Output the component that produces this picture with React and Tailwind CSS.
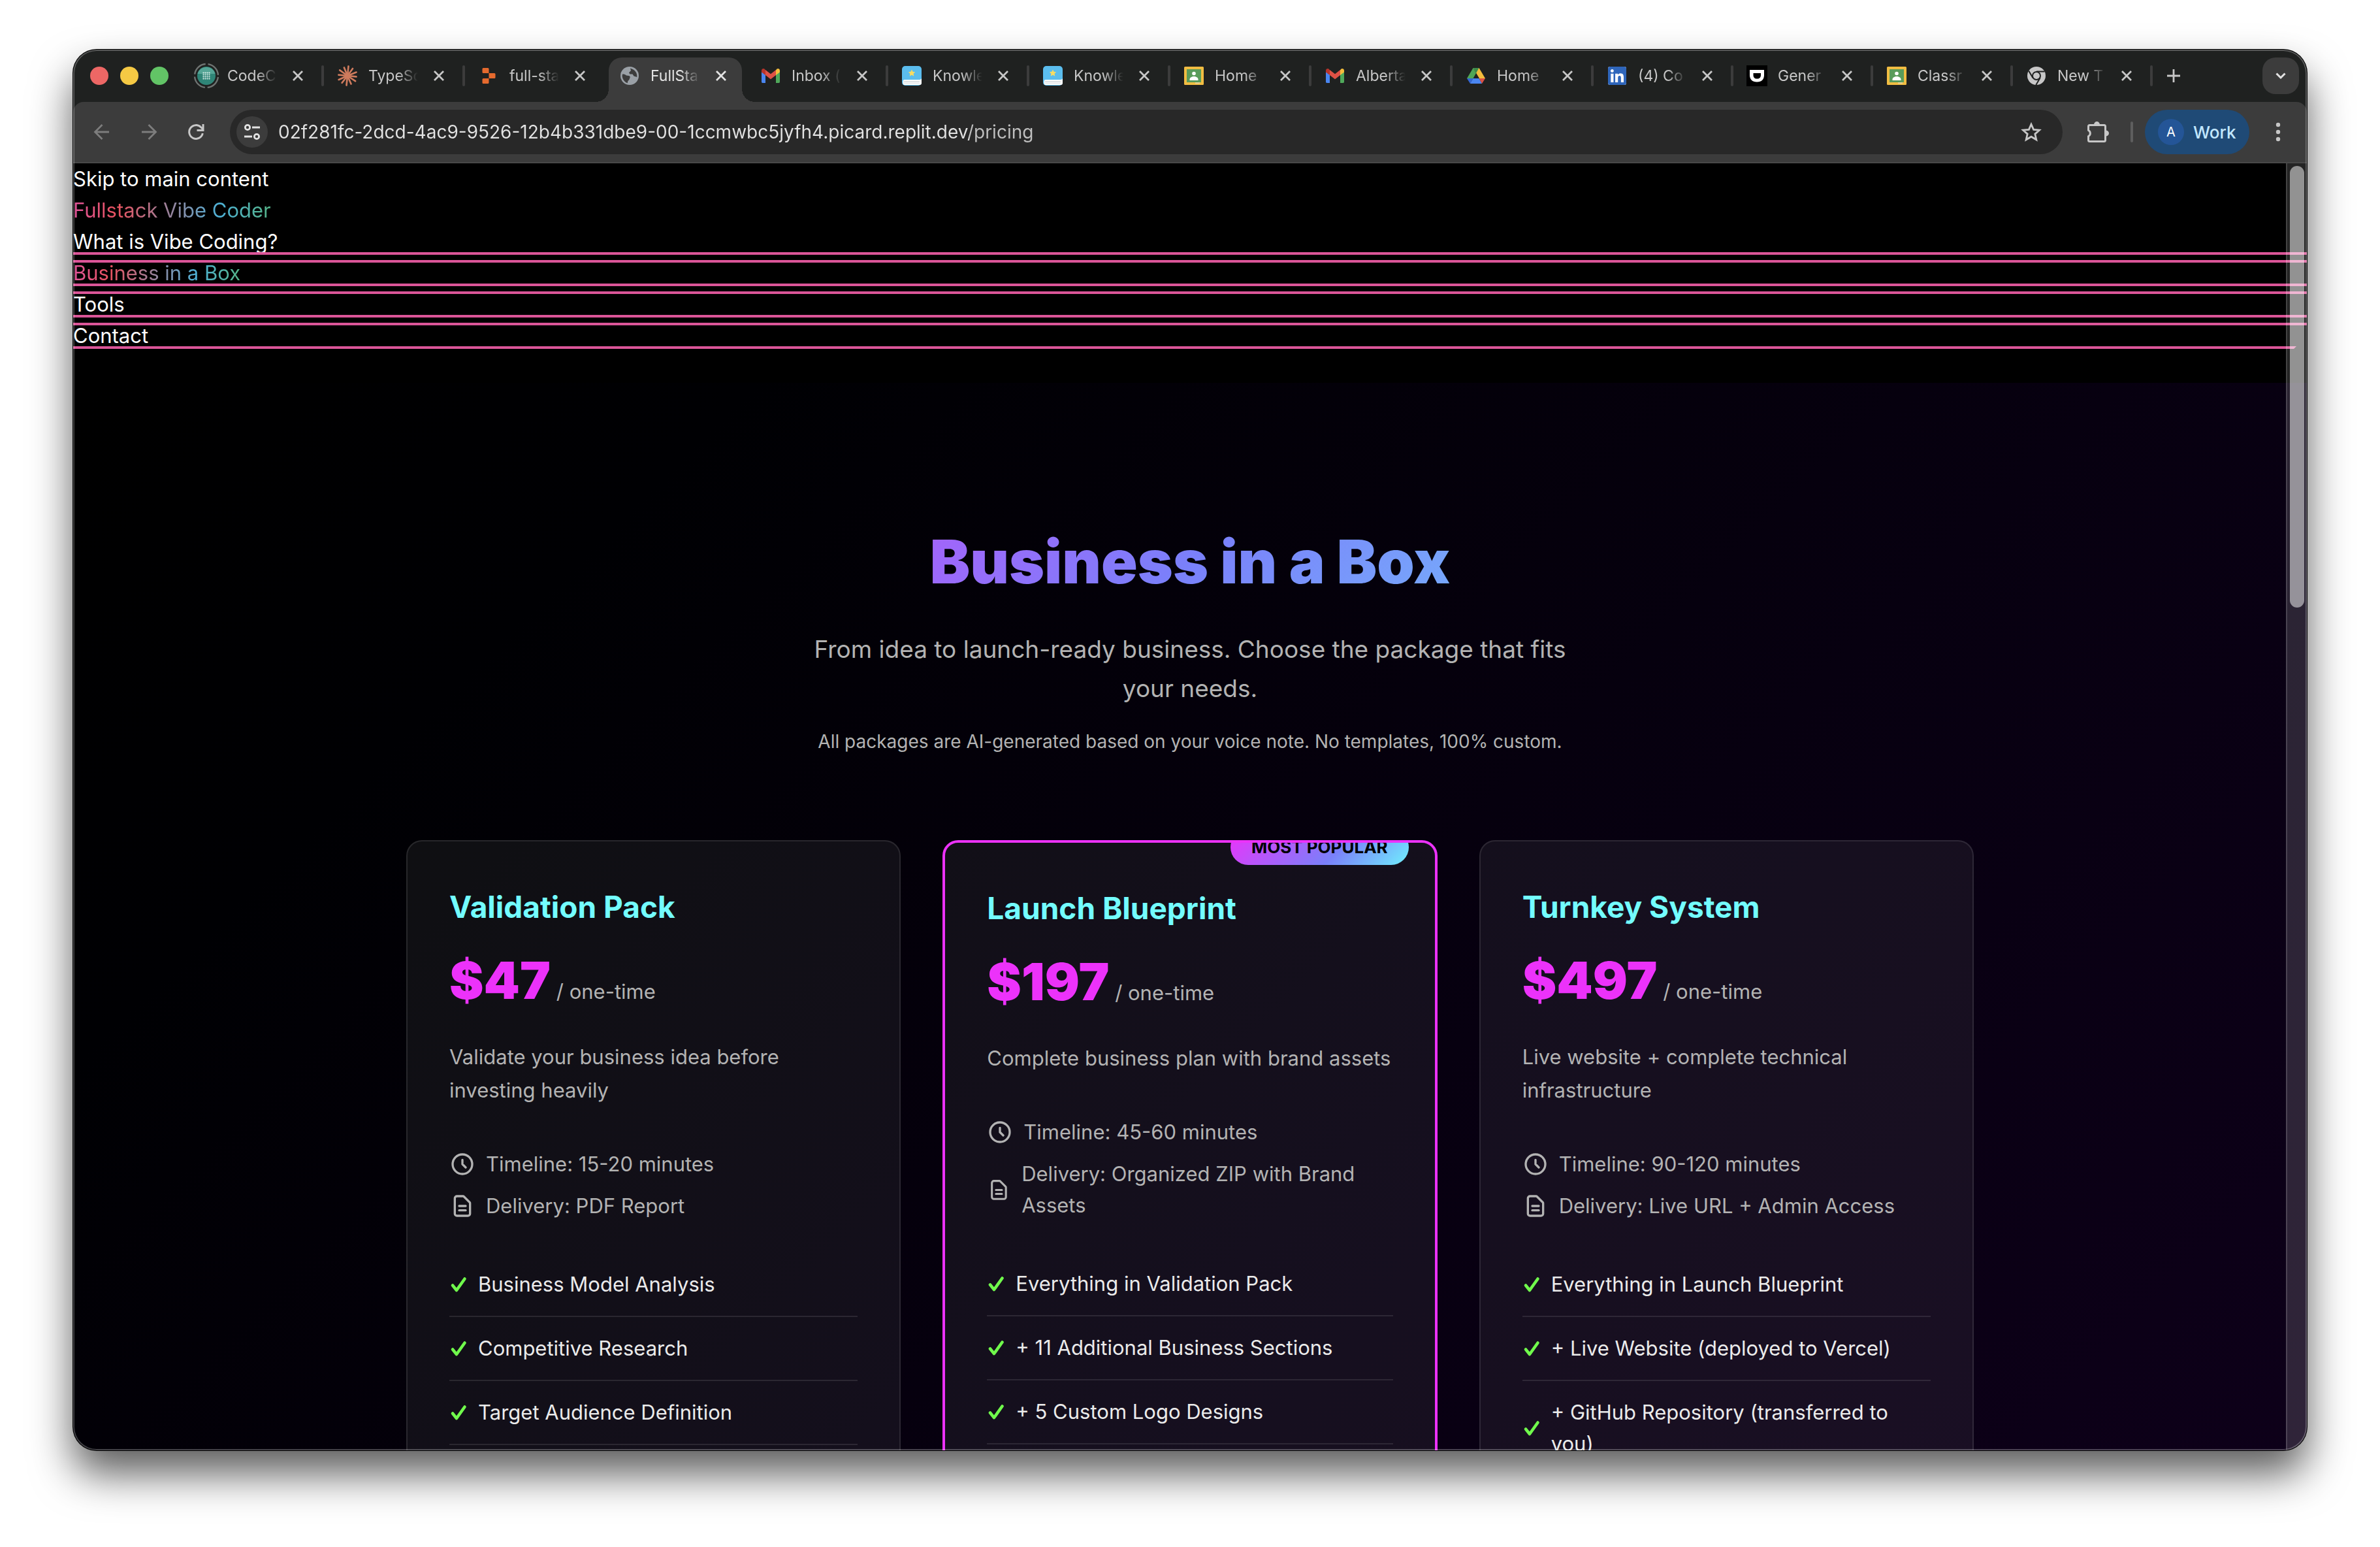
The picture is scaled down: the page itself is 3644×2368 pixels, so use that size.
import React from "react";
import { FaLinkedin } from "react-icons/fa";

/* ---------- favicons ---------- */

function CodeIcon() {
  return (
    <svg viewBox="0 0 40 40" className="-m-1 size-10 shrink-0">
      <circle cx="20" cy="20" r="18" fill="none" stroke="#6f7472" strokeWidth="2.4" strokeDasharray="24.3 4" strokeDashoffset="-2" />
      <circle cx="20" cy="20" r="14" fill="#2f8577" />
      <path d="M6.5 17a14 14 0 0 1 27 0z" fill="#55a596" />
      {[15.5, 18.5, 21.5, 24.5].map((y) =>
        [15.5, 18.5, 21.5, 24.5].map((x) => <circle key={x + "-" + y} cx={x} cy={y} r="1.1" fill="#e6f5f1" />)
      )}
    </svg>
  );
}

function BurstIcon() {
  const rays = [0, 30, 62, 90, 118, 150, 180, 212, 240, 270, 300, 332];
  return (
    <svg viewBox="0 0 32 32" className="size-8 shrink-0">
      {rays.map((a, i) => (
        <line key={a} x1="16" y1="16" x2="16" y2={i % 2 ? 2.4 : 1.4} stroke="#cf7b5d" strokeWidth="2.7" strokeLinecap="round" transform={`rotate(${a + 6} 16 16)`} />
      ))}
    </svg>
  );
}

function BlocksIcon() {
  return (
    <svg viewBox="0 0 32 32" className="size-8 shrink-0" fill="#e56a2e">
      <path d="M8 4h7a1.500 1.500 0 0 1 1.500 1.500V12H8a1.500 1.500 0 0 1-1.500-1.500v-5A1.500 1.500 0 0 1 8 4z" />
      <path d="M16.500 12H25a1.500 1.500 0 0 1 1.500 1.500v5A1.500 1.500 0 0 1 25 20h-8.500z" />
      <path d="M8 20h8.500v6.500A1.500 1.500 0 0 1 15 28H8a1.500 1.500 0 0 1-1.500-1.500v-5A1.500 1.500 0 0 1 8 20z" />
    </svg>
  );
}

function GlobeIcon() {
  return (
    <svg viewBox="0 0 32 32" className="size-8 shrink-0">
      <circle cx="16" cy="16" r="14" fill="#9aa0a6" />
      <path d="M5 13.500c2-.2 4 .2 6 2l4 .5c1.500.3 2 1.600 1.500 3l-1 2.500c-.3 1.200-1 1.600-2 2.200l-.8 3.500C8 25.500 4.800 21 4.600 16z" fill="#3c3c3c" />
      <path d="M17 4.500l1 3.500-3 3.200 1.500 2.200h4l2 3 4.800 1.500c.6-5.400-2.300-11.200-10.300-13.400z" fill="#3c3c3c" />
    </svg>
  );
}

function MailIcon() {
  return (
    <svg viewBox="0 0 32 32" className="size-8 shrink-0">
      <path d="M2 10v15.500A1.800 1.800 0 0 0 3.800 27H8V13z" fill="#4a86f0" />
      <path d="M30 10v15.500a1.800 1.800 0 0 1-1.800 1.500H24V13z" fill="#4fa95a" />
      <path d="M24 7.500V15l6-4.500V8.200c0-2.700-2.700-4-4.800-2.500z" fill="#f4bd3c" />
      <path d="M8 7.500V15l-6-4.500V8.200c0-2.700 2.700-4 4.800-2.500z" fill="#b8342b" />
      <path d="M8 15V7l8 6.200L24 7v8l-8 6.200z" fill="#de5145" />
    </svg>
  );
}

function BookIcon() {
  return (
    <svg viewBox="0 0 32 32" className="size-8 shrink-0">
      <rect x="1" y="1" width="30" height="30" rx="5" fill="#5bbdee" />
      <path d="M2.500 24.500A2.500 2.500 0 0 1 5 22h23a3 3 0 0 0 3-2v7a3 3 0 0 1-3 3H5a2.500 2.500 0 0 1-2.500-2.500z" fill="#fff" />
      <path d="M4 24.500h24M4 27h24" stroke="#c9ced1" strokeWidth="1" />
      <path d="M16 6.500l1.600 3.300 3.600.5-2.600 2.500.6 3.600-3.200-1.700-3.200 1.700.6-3.600-2.600-2.500 3.600-.5z" fill="#f8dc62" />
    </svg>
  );
}

function ClassIcon() {
  return (
    <svg viewBox="0 0 32 32" className="size-8 shrink-0">
      <rect x="1" y="2" width="30" height="28" rx="1.500" fill="#f1bd42" />
      <rect x="5" y="6" width="22" height="20" fill="#5a9c5b" />
      <circle cx="16" cy="12.500" r="2.800" fill="#fff" />
      <path d="M9.500 21.500c0-3 3.500-4.500 6.500-4.500s6.500 1.500 6.500 4.500V23h-13z" fill="#fff" />
      <path d="M18 26h7v2.200h-7z" fill="#e4e4e4" opacity=".5" />
    </svg>
  );
}

function DriveIcon() {
  return (
    <svg viewBox="0 0 32 32" className="size-8 shrink-0">
      <path d="M20.500 4L30 20h-9L11.500 4z" fill="#f4bd3c" />
      <path d="M11.500 4L16 12l-4.500 8H2z" fill="#4fa657" />
      <path d="M11.500 4h9L16 12z" fill="#3c8b4a" />
      <path d="M2 20h9.300L7 28z" fill="#3367d6" />
      <path d="M11.300 20h9.400L25 28H7z" fill="#4a86f0" />
      <path d="M20.700 20H30l-5 8z" fill="#de5145" />
    </svg>
  );
}

function LinkedIcon() {
  return (
    <span className="grid size-8 shrink-0 place-items-center">
      <FaLinkedin className="size-8 bg-white text-[#2f66bb] [clip-path:inset(2px_2px_2px_2px_round_3px)]" />
    </span>
  );
}

function ShieldIcon() {
  return (
    <svg viewBox="0 0 32 32" className="size-8 shrink-0">
      <rect width="32" height="32" fill="#000" />
      <path d="M5 7h22v8c0 6.500-4 10.500-11 10.500S5 21.500 5 15z" fill="#fff" />
      <path d="M10.500 12h11.500v3c0 3.500-2 5.500-5.800 5.500s-5.700-2-5.700-5.500z" fill="#000" />
    </svg>
  );
}

function ChromeIcon() {
  return (
    <svg viewBox="0 0 32 32" className="size-8 shrink-0">
      <circle cx="16" cy="16" r="14" fill="#c7c7c7" />
      <circle cx="16" cy="16" r="7" fill="#1f2120" />
      <circle cx="16" cy="16" r="5" fill="#c7c7c7" />
      <path d="M16 9.600h12.500M10.500 19.200L4.200 8.400M21.600 19.200L15.300 30" stroke="#1f2120" strokeWidth="2" fill="none" />
    </svg>
  );
}

/* ---------- browser chrome ---------- */

function Close() {
  return (
    <svg viewBox="0 0 32 32" className="size-8" stroke="currentColor" strokeWidth="2.800" fill="none">
      <path d="M9 9l14 14M23 9L9 23" />
    </svg>
  );
}

const tabs = [
  { title: "CodeC", Icon: CodeIcon },
  { title: "TypeSc", Icon: BurstIcon },
  { title: "full-sta", Icon: BlocksIcon },
  { title: "FullSta", Icon: GlobeIcon, active: true },
  { title: "Inbox (", Icon: MailIcon },
  { title: "Knowle", Icon: BookIcon },
  { title: "Knowle", Icon: BookIcon },
  { title: "Home", Icon: ClassIcon },
  { title: "Alberta", Icon: MailIcon },
  { title: "Home", Icon: DriveIcon },
  { title: "(4) Co", Icon: LinkedIcon, narrow: true },
  { title: "Gener", Icon: ShieldIcon, narrow: true },
  { title: "Classr", Icon: ClassIcon, narrow: true },
  { title: "New T", Icon: ChromeIcon, narrow: true },
];

function Tab({ tab, divider }) {
  const { title, Icon, active, narrow } = tab;
  return (
    <div className={`relative flex h-full items-center px-[22px] ${narrow ? "w-[214px]" : "w-[216px]"} ${active ? "text-[#e3e3e3]" : "text-[#c7c7c7]"}`}>
      {active && (
        <div className="absolute inset-x-[6px] top-3 bottom-0 rounded-t-[20px] bg-[#3c3c3c] before:absolute before:right-full before:bottom-0 before:size-5 before:bg-[radial-gradient(circle_at_0_0,transparent_20px,#3c3c3c_20px)] after:absolute after:bottom-0 after:left-full after:size-5 after:bg-[radial-gradient(circle_at_100%_0,transparent_20px,#3c3c3c_20px)]" />
      )}
      <button className="relative flex min-w-0 flex-1 items-center gap-4 text-left">
        <Icon />
        <span className="min-w-0 flex-1 text-[23px] leading-8 whitespace-nowrap [mask-image:linear-gradient(to_right,#000_60%,transparent)]">{title}</span>
      </button>
      <button aria-label={`Close ${title}`} className="relative ml-4 shrink-0">
        <Close />
      </button>
      {divider && <span className="absolute top-6 -right-[2px] h-8 w-1 rounded-full bg-[#3c3c3c]" />}
    </div>
  );
}

function TabStrip() {
  return (
    <div className="flex h-20 shrink-0 items-center pr-3 pl-[26px]">
      <div className="mr-5 flex gap-[18px]">
        <button aria-label="Close window" className="size-7 rounded-full bg-[#ed6765]" />
        <button aria-label="Minimize window" className="size-7 rounded-full bg-[#f5c944]" />
        <button aria-label="Zoom window" className="size-7 rounded-full bg-[#62c466]" />
      </div>
      {tabs.map((t, i) => (
        <Tab key={i} tab={t} divider={i !== 2 && i !== 3} />
      ))}
      <button aria-label="New tab" className="ml-[18px] text-[#c7c7c7]">
        <svg viewBox="0 0 32 32" className="size-8" stroke="currentColor" strokeWidth="2.800">
          <path d="M16 6v20M6 16h20" />
        </svg>
      </button>
      <button aria-label="Search tabs" className="ml-auto grid size-14 place-items-center rounded-[20px] bg-[#3c3c3c] text-[#e3e3e3]">
        <svg viewBox="0 0 32 32" className="size-8" stroke="currentColor" strokeWidth="3" fill="none">
          <path d="M9.500 12.500L16 19l6.500-6.500" />
        </svg>
      </button>
    </div>
  );
}

function Toolbar() {
  return (
    <div className="flex h-[94px] shrink-0 items-center rounded-t-2xl border-b-2 border-[#484848] bg-[#3c3c3c] pr-6 pl-6">
      <button aria-label="Back" className="size-10 text-[#7d7d7d]">
        <svg viewBox="0 0 40 40" stroke="currentColor" strokeWidth="2.800" fill="none">
          <path d="M31 20H10M20.500 9L9.500 20l11 11" />
        </svg>
      </button>
      <button aria-label="Forward" className="ml-8 size-10 text-[#7d7d7d]">
        <svg viewBox="0 0 40 40" stroke="currentColor" strokeWidth="2.800" fill="none">
          <path d="M9 20h21M19.500 9l11 11-11 11" />
        </svg>
      </button>
      <button aria-label="Reload" className="ml-8 size-10 text-[#c7c7c7]">
        <svg viewBox="0 0 40 40" stroke="currentColor" strokeWidth="3" fill="none">
          <path d="M30.300 22a10.400 10.400 0 1 1-2.700-9.200l3 3" />
          <path d="M31 8v9.500h-9.500" />
        </svg>
      </button>
      <div className="ml-8 flex h-[68px] flex-1 items-center rounded-full bg-[#282828] pr-8 pl-[10px]">
        <button aria-label="Site information" className="grid size-12 shrink-0 place-items-center rounded-full bg-[#3c3c3c] text-[#e3e3e3]">
          <svg viewBox="0 0 32 32" className="size-8" stroke="currentColor" strokeWidth="2.800" fill="none">
            <circle cx="9" cy="9" r="3.600" />
            <path d="M16 9h12M4 23h12" />
            <circle cx="23" cy="23" r="3.600" />
          </svg>
        </button>
        <input
          aria-label="Address"
          readOnly
          value="02f281fc-2dcd-4ac9-9526-12b4b331dbe9-00-1ccmwbc5jyfh4.picard.replit.dev/pricing"
          className="ml-4 min-w-0 flex-1 bg-[linear-gradient(to_right,#e3e3e3_1058px,#c0c0c0_1058px)] bg-clip-text text-[28px] leading-10 text-transparent outline-none"
        />
        <button aria-label="Bookmark" className="size-8 text-[#c7c7c7]">
          <svg viewBox="0 0 32 32" stroke="currentColor" strokeWidth="2.800" fill="none" strokeLinejoin="miter">
            <path d="M16 4.200l3.600 8.200 8.900.8-6.700 5.900 2 8.700-7.800-4.600-7.800 4.600 2-8.700-6.700-5.900 8.900-.8z" />
          </svg>
        </button>
      </div>
      <button aria-label="Extensions" className="ml-[34px] size-10 text-[#c7c7c7]">
        <svg viewBox="0 0 40 40" stroke="currentColor" strokeWidth="3" fill="none" strokeLinejoin="round">
          <path d="M7.500 9.500h22a2 2 0 0 1 2 2v21a2 2 0 0 1-2 2h-22a2 2 0 0 1-2-2v-6a5 5 0 0 0 0-9v-6a2 2 0 0 1 2-2z" />
          <path d="M14 9a4.500 5 0 0 1 9 0zM32 17.500a5 4.500 0 0 1 0 9z" fill="currentColor" stroke="none" />
        </svg>
      </button>
      <span className="ml-[30px] h-8 w-1 rounded-full bg-[#5e5e5e]" />
      <button className="ml-[18px] flex h-[68px] w-[160px] items-center gap-[14px] rounded-full bg-[#1f4a76] pl-5 text-[26px] font-medium text-[#c2e7ff]">
        <span className="grid size-10 place-items-center rounded-full bg-[#245597] text-xl font-normal text-white">A</span>
        Work
      </button>
      <button aria-label="Menu" className="ml-6 size-10 text-[#c7c7c7]">
        <svg viewBox="0 0 40 40" fill="currentColor">
          <circle cx="20" cy="9" r="3.200" />
          <circle cx="20" cy="20" r="3.200" />
          <circle cx="20" cy="31" r="3.200" />
        </svg>
      </button>
    </div>
  );
}

/* ---------- page ---------- */

const rainbow = "bg-[linear-gradient(90deg,#e0559a_0%,#e8525f_22%,#4db1d6_74%,#55b488_100%)] bg-clip-text text-transparent";

const links = [
  { label: "What is Vibe Coding?" },
  { label: "Business in a Box", current: true },
  { label: "Tools" },
  { label: "Contact" },
];

function SiteNav() {
  return (
    <nav className="bg-black pb-12 text-[31px] leading-[48px] text-white">
      <a href="#main" className="block">Skip to main content</a>
      <a href="#home" className={`block w-fit ${rainbow}`}>Fullstack Vibe Coder</a>
      <ul>
        {links.map((l, i) => (
          <li key={l.label} className="relative h-12">
            <a href="#page" className={`block w-fit ${l.current ? rainbow : ""}`}>{l.label}</a>
            {i < links.length - 1 ? (
              <span className="absolute inset-x-0 top-10 z-10 h-4 border-y-4 border-[#db5598]" />
            ) : (
              <span className="absolute right-4 left-0 top-10 z-10 border-t-4 border-r-4 border-t-[#db5598] border-r-transparent" />
            )}
          </li>
        ))}
      </ul>
    </nav>
  );
}

function ClockIcon() {
  return (
    <svg viewBox="0 0 24 24" className="w-10" fill="none" stroke="currentColor" strokeWidth="2" strokeLinecap="round" strokeLinejoin="round">
      <path d="M12 8v4l3 3m6-3a9 9 0 11-18 0 9 9 0 0118 0z" />
    </svg>
  );
}

function DocIcon() {
  return (
    <svg viewBox="0 0 24 24" className="w-10" fill="none" stroke="currentColor" strokeWidth="2" strokeLinecap="round" strokeLinejoin="round">
      <path d="M9 12h6m-6 4h6m2 5H7a2 2 0 01-2-2V5a2 2 0 012-2h5.586a1 1 0 01.707.293l5.414 5.414a1 1 0 01.293.707V19a2 2 0 01-2 2z" />
    </svg>
  );
}

function CheckIcon() {
  return (
    <svg viewBox="0 0 28 28" className="size-7 shrink-0" fill="none" stroke="#70fa4c" strokeWidth="4.600" strokeLinecap="round" strokeLinejoin="round">
      <path d="M5 15.500l6 7.500L23.500 5.500" />
    </svg>
  );
}

const plans = [
  {
    name: "Validation Pack",
    price: "$47",
    text: "Validate your business idea before investing heavily",
    timeline: "Timeline: 15-20 minutes",
    delivery: "Delivery: PDF Report",
    features: ["Business Model Analysis", "Competitive Research", "Target Audience Definition"],
  },
  {
    name: "Launch Blueprint",
    price: "$197",
    text: "Complete business plan with brand assets",
    timeline: "Timeline: 45-60 minutes",
    delivery: "Delivery: Organized ZIP with Brand Assets",
    features: ["Everything in Validation Pack", "+ 11 Additional Business Sections", "+ 5 Custom Logo Designs"],
    popular: true,
  },
  {
    name: "Turnkey System",
    price: "$497",
    text: "Live website + complete technical infrastructure",
    timeline: "Timeline: 90-120 minutes",
    delivery: "Delivery: Live URL + Admin Access",
    features: ["Everything in Launch Blueprint", "+ Live Website (deployed to Vercel)", "+ GitHub Repository (transferred to you)"],
  },
];

function PlanCard({ plan }) {
  return (
    <article className={`relative overflow-hidden rounded-3xl bg-white/[0.06] p-16 ${plan.popular ? "border-4 border-[#ec32fa]" : "border-2 border-white/10"}`}>
      {plan.popular && (
        <span className="absolute -top-5 right-10 rounded-full bg-[linear-gradient(135deg,#ec32fa_0%,#7a80fa_60%,#70f0fd_100%)] px-8 py-2 text-[26px] leading-[38px] font-bold text-black">
          MOST POPULAR
        </span>
      )}
      <h2 className="text-[46px] leading-[72px] font-bold text-[#73fdff]">{plan.name}</h2>
      <p className="mt-4 text-[79px] leading-[120px] font-black text-[#ec32fa]">
        {plan.price}
        <span className="text-[31px] leading-none font-normal text-[#b3b3b3]"> / one-time</span>
      </p>
      <p className="mt-8 text-[31px] leading-[51px] text-[#b3b3b3]">{plan.text}</p>
      <div className="mt-16 flex flex-col gap-4 text-[31px] leading-[48px] text-[#b3b3b3]">
        <div className="flex items-center gap-4">
          <ClockIcon />
          <span>{plan.timeline}</span>
        </div>
        <div className="flex items-center gap-4">
          <DocIcon />
          <span>{plan.delivery}</span>
        </div>
      </div>
      <ul className="mt-12 text-[31px] leading-[48px] text-[#ebebeb]">
        {plan.features.map((f) => (
          <li key={f} className="flex items-center gap-4 border-b-2 border-white/10 py-6">
            <CheckIcon />
            <span>{f}</span>
          </li>
        ))}
      </ul>
    </article>
  );
}

function Pricing() {
  return (
    <main id="main" className="bg-[linear-gradient(135deg,#000_0%,#000003_20%,#070010_60%,#0e001a_100%)] px-16 pt-[216px] pb-16">
      <div className="mx-auto max-w-[2400px]">
        <h1 className="bg-[linear-gradient(135deg,#ec32fa_0%,#7a80fa_50%,#70f0fd_100%)] bg-clip-text text-center text-[92px] leading-[116px] font-black text-transparent">
          Business in a Box
        </h1>
        <p className="mx-auto mt-[46px] max-w-[1200px] text-center text-[37px] leading-[60px] text-[#b3b3b3]">
          From idea to launch-ready business. Choose the package that fits your needs.
        </p>
        <p className="mt-7 text-center text-[28px] leading-[46px] text-[#b3b3b3]">
          All packages are AI-generated based on your voice note. No templates, 100% custom.
        </p>
        <div className="mt-32 grid grid-cols-3 gap-16">
          {plans.map((p) => (
            <PlanCard key={p.name} plan={p} />
          ))}
        </div>
      </div>
    </main>
  );
}

export default function App() {
  return (
    <div className="flex h-screen flex-col bg-white px-28 pt-[76px] pb-[148px] font-['Inter',sans-serif]">
      <div className="relative flex min-h-0 flex-1 flex-col overflow-hidden rounded-[36px] bg-[#1f2120] shadow-[0_0_0_1px_#000,0_36px_64px_rgba(0,0,0,0.64)]">
        <TabStrip />
        <Toolbar />
        <div className="relative min-h-0 flex-1 overflow-hidden bg-black">
          <SiteNav />
          <Pricing />
          <div className="absolute inset-y-0 right-0 z-20 w-8 border-l-2 border-white/15 bg-white/[0.14]">
            <div className="mx-1 mt-1 h-[34.3%] w-[22px] rounded-full bg-white/50" />
          </div>
        </div>
        <div className="pointer-events-none absolute inset-0 z-30 rounded-[36px] shadow-[inset_0_0_0_2px_rgba(255,255,255,0.25)]" />
      </div>
    </div>
  );
}
